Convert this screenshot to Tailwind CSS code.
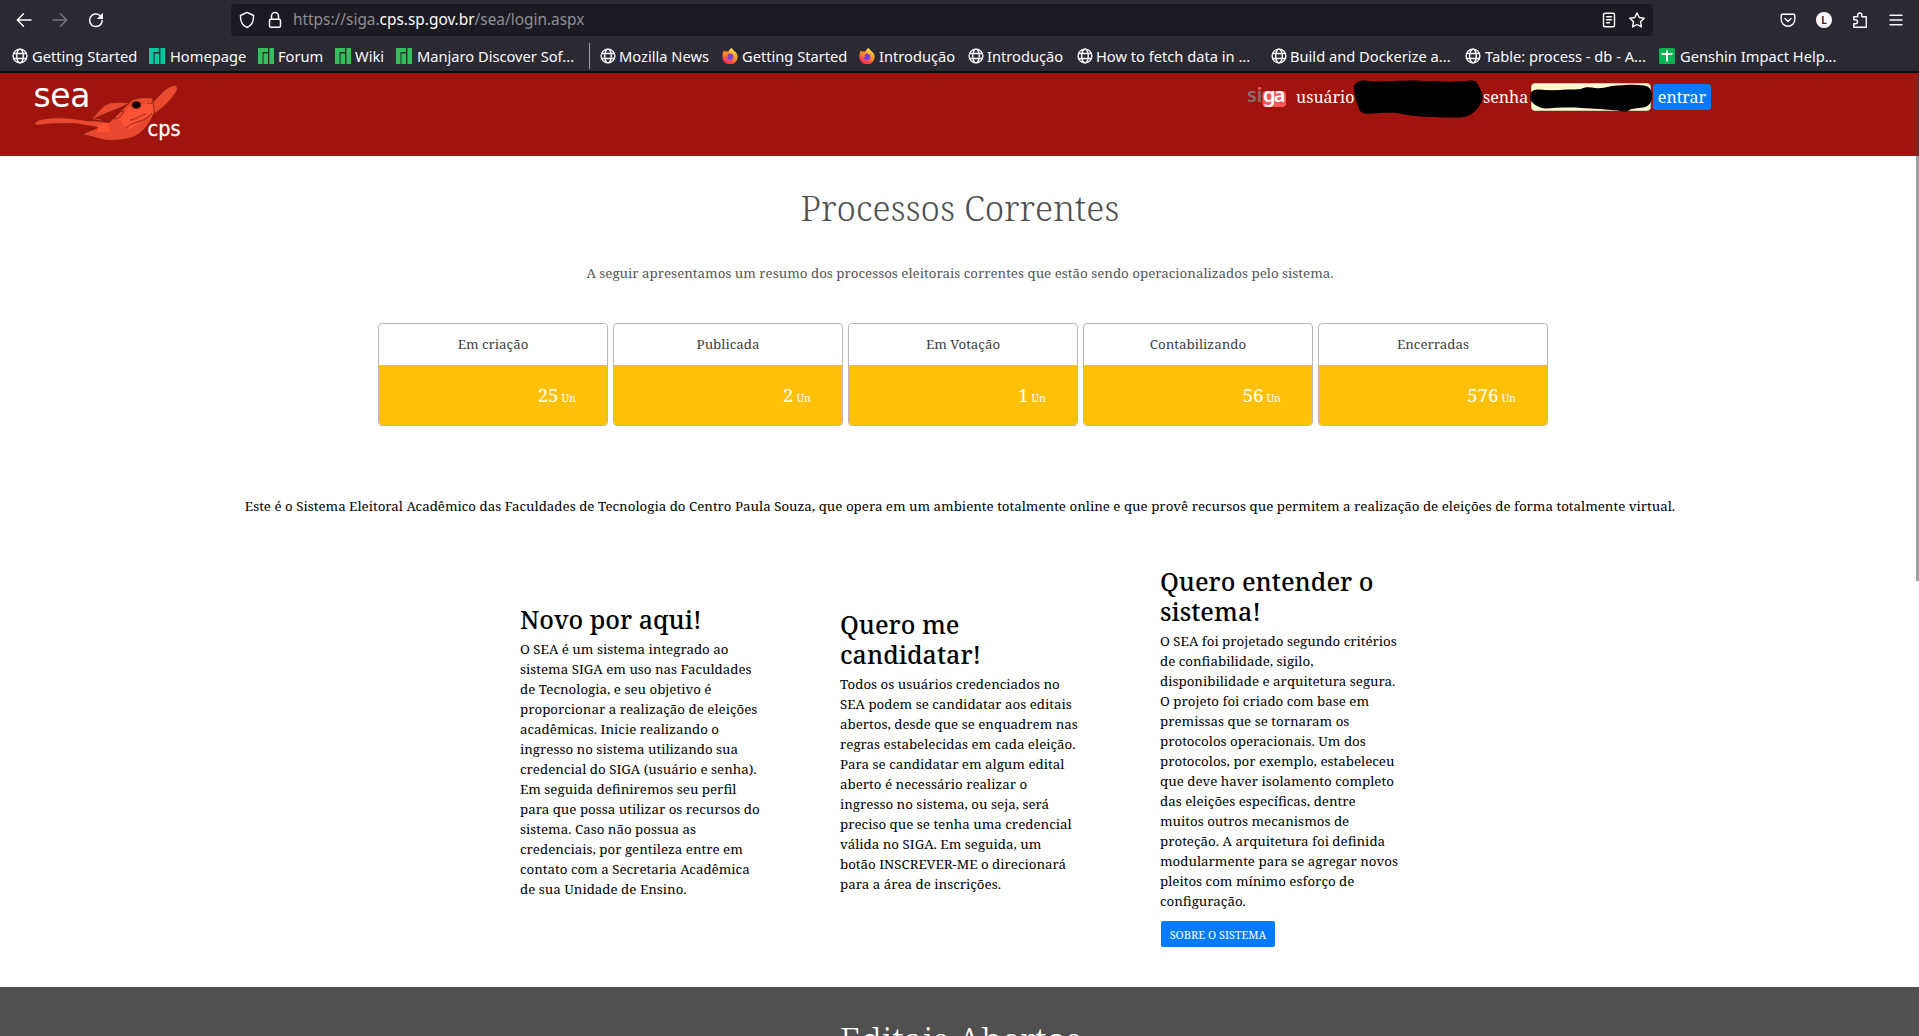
<!DOCTYPE html>
<html lang="pt-BR">
<head>
<meta charset="utf-8">
<title>SEA - Sistema Eleitoral Acadêmico</title>
<script src="https://cdn.jsdelivr.net/npm/@tailwindcss/browser@4"></script>
</head>
<body class="w-[1919px] h-[1036px] overflow-hidden bg-white text-black font-['Noto_Serif','DejaVu_Serif',serif]">
<svg class="absolute size-0">
  <defs><linearGradient id="flame" x1=".8" y1="0" x2=".3" y2="1"><stop offset="0" stop-color="#fff04f"/><stop offset=".45" stop-color="#ff9a24"/><stop offset="1" stop-color="#fb1763"/></linearGradient></defs>
  <symbol id="globe" viewBox="0 0 16 16"><g fill="none" stroke="#fbfbfe" stroke-width="1.4"><circle cx="8" cy="8" r="6.9"/><ellipse cx="8" cy="8" rx="3.3" ry="6.9"/><path d="M1.500 5.500h13M1.500 10.500h13"/></g></symbol>
  <symbol id="manjaro" viewBox="0 0 16 16"><path fill="currentColor" d="M0 0h10v4H4.500v12H0zM5.600 5.400H10V16H5.600zM11.400 0H16v16h-4.600z"/></symbol>
  <symbol id="firefox" viewBox="0 0 16 16">
    <path fill="url(#flame)" d="M9.500 0c1.200 1 1.500 2 2.800 3 2 1.600 3.400 3.400 3.300 6.200A7.600 7.600 0 0 1 .4 8.500C.3 6 1.200 3.600 2 2.300c.2.800.5 1.200 1 1.500 1-.5 2.300-.5 3.500-.2C7 2 8 .8 9.500 0z"/>
    <circle cx="8" cy="8.800" r="3.300" fill="#7a3fe0"/>
    <path fill="#ff8a1a" d="M2.300 4.300c2-.8 3.800-.4 5.200.6-.4 1.100-1.700 1-2 2-.2.900.8 1.300 1.500 1.700-1.500 1-2.800 0-3.300-1.300z"/>
  </symbol>
</svg>

<!-- Browser toolbar -->
<div class="h-[73px] bg-[#2b2a33] border-b-2 border-[#0e0d12] font-['Noto_Sans',sans-serif] text-[#fbfbfe] text-[14.67px]">
  <div class="h-10 flex items-center">
    <svg class="ml-4 size-4" viewBox="0 0 16 16" fill="none" stroke="#fbfbfe" stroke-width="1.500" stroke-linecap="round" stroke-linejoin="round"><path d="M15 8H1.500M7.500 1.800 1.300 8l6.200 6.200"/></svg>
    <svg class="ml-5 size-4" viewBox="0 0 16 16" fill="none" stroke="#77767d" stroke-width="1.500" stroke-linecap="round" stroke-linejoin="round"><path d="M1 8h13.500M8.500 1.800 14.700 8l-6.200 6.200"/></svg>
    <svg class="ml-5 size-4" viewBox="0 0 16 16"><path d="M14.200 8.500A6.300 6.300 0 1 1 12 3.500" fill="none" stroke="#fbfbfe" stroke-width="1.500" stroke-linecap="round"/><path fill="#fbfbfe" d="M15 .8V7H8.800z"/></svg>
    <div class="ml-[127px] w-[1422px] h-8 rounded bg-[#1c1b22] flex items-center">
      <svg class="ml-2 size-4 overflow-visible" viewBox="0 0 16 16" fill="none" stroke="#fbfbfe" stroke-width="1.400" stroke-linejoin="round"><path d="M8 .4 14.600 3.500C14.700 9.500 13 13.500 8 15.500 3 13.500 1.300 9.500 1.400 3.500z"/></svg>
      <svg class="ml-3 size-4 overflow-visible" viewBox="0 0 16 16" fill="none" stroke="#fbfbfe" stroke-width="1.500"><rect x="2.500" y="7.200" width="11" height="8" rx="1.500"/><path d="M4.500 7V4a3.500 3.500 0 0 1 7 0v3"/></svg>
      <span class="ml-[10px] text-[15.400px] text-[#8f8f97]">https://siga.<span class="text-[#fbfbfe]">cps.sp.gov.br</span>/sea/login.aspx</span>
      <svg class="ml-auto size-4" viewBox="0 0 16 16" fill="none" stroke="#fbfbfe" stroke-width="1.400" stroke-linecap="round"><rect x="2.500" y="1.200" width="11" height="13.600" rx="1.500"/><path d="M5.500 4.800h5M5.500 7.800h5M5.500 10.800h3"/></svg>
      <svg class="ml-3 mr-2 size-4" viewBox="0 0 16 16" fill="none" stroke="#fbfbfe" stroke-width="1.400" stroke-linejoin="round"><path d="m8 .9 2.200 4.600 5 .7-3.700 3.500.9 5.200L8 12.500l-4.400 2.400.9-5.200L.8 6.200l5-.7z"/></svg>
    </div>
    <svg class="ml-[127px] size-4" viewBox="0 0 16 16" fill="none" stroke="#fbfbfe" stroke-width="1.400" stroke-linecap="round" stroke-linejoin="round"><path d="M2.500 2.200h11a1.300 1.300 0 0 1 1.300 1.300v4a6.800 6.800 0 0 1-13.600 0v-4a1.300 1.300 0 0 1 1.300-1.300zM5 6.500l3 3 3-3"/></svg>
    <div class="ml-5 size-4 rounded-full bg-[#fbfbfe] text-[#2b2a33] text-[10px] font-bold flex items-center justify-center">L</div>
    <svg class="ml-5 size-4" viewBox="0 0 16 16" fill="none" stroke="#fbfbfe" stroke-width="1.400" stroke-linejoin="round"><path d="M1.800 4.700h4V3a2 2 0 0 1 4 0v1.700h4.500v10.500H1.800v-3.500h1.700a2 2 0 0 0 0-4H1.800z"/></svg>
    <svg class="ml-5 size-4" viewBox="0 0 16 16" stroke="#fbfbfe" stroke-width="1.500" stroke-linecap="round"><path d="M2 3.200h12M2 8h12M2 12.800h12"/></svg>
  </div>
  <div class="h-8 pl-[12px] flex items-center whitespace-nowrap">
    <div class="w-[137px] flex items-center gap-1"><svg class="size-4"><use href="#globe"/></svg><span>Getting Started</span></div>
    <div class="w-[109px] flex items-center gap-[5px]"><svg class="size-4 text-[#00c8a0]"><use href="#manjaro"/></svg><span>Homepage</span></div>
    <div class="w-[77px] flex items-center gap-1"><svg class="size-4 text-[#35bf5c]"><use href="#manjaro"/></svg><span>Forum</span></div>
    <div class="w-[61px] flex items-center gap-1"><svg class="size-4 text-[#35bf5c]"><use href="#manjaro"/></svg><span>Wiki</span></div>
    <div class="w-[193px] flex items-center gap-[5px]"><svg class="size-4 text-[#35bf5c]"><use href="#manjaro"/></svg><span>Manjaro Discover Sof...</span></div>
    <div class="w-px h-[26px] mr-[10px] bg-[#a0a0a6]"></div>
    <div class="w-[122px] flex items-center gap-[3px]"><svg class="size-4"><use href="#globe"/></svg><span>Mozilla News</span></div>
    <div class="w-[137px] flex items-center gap-1"><svg class="size-4"><use href="#firefox"/></svg><span>Getting Started</span></div>
    <div class="w-[109px] flex items-center gap-1"><svg class="size-4"><use href="#firefox"/></svg><span>Introdução</span></div>
    <div class="w-[109px] flex items-center gap-[3px]"><svg class="size-4"><use href="#globe"/></svg><span>Introdução</span></div>
    <div class="w-[194px] flex items-center gap-[3px]"><svg class="size-4"><use href="#globe"/></svg><span>How to fetch data in ...</span></div>
    <div class="w-[194px] flex items-center gap-[3px]"><svg class="size-4"><use href="#globe"/></svg><span>Build and Dockerize a...</span></div>
    <div class="w-[194px] flex items-center gap-1"><svg class="size-4"><use href="#globe"/></svg><span>Table: process - db - A...</span></div>
    <div class="flex items-center gap-[5px]"><svg class="size-4" viewBox="0 0 16 16"><rect width="16" height="16" rx="1.500" fill="#00b451"/><path d="M2.500 6h11M8 2.500v11" stroke="#fff" stroke-width="2"/></svg><span>Genshin Impact Help...</span></div>
  </div>
</div>

<!-- Site header -->
<header class="h-[83px] bg-[#a1130d] flex items-start">
  <svg class="ml-8 mt-2 w-[152px] h-[66px] shrink-0" viewBox="32 81 152 66">
    <g stroke="#7d1b10" stroke-width=".7" stroke-linejoin="round">
      <path fill="#e8482e" d="M92 119c6-7 11-14 18-16 7-1 14-1 20 0l-21 11-8 7z"/>
      <path fill="#a1130d" d="M95 118l32-13-18 16z"/>
      <path fill="#ea4a2e" d="M152 103C160 95 165 88 172 86C176 84.500 178 87 177 90C173 99 163 108 154 114z"/>
      <path fill="#e8482e" d="M34.700 123.500C36 120 46 117.800 57 117.800C70 118 78 119 88 121C96 120 102 122 109 122.500C118 114 125 107 131 101C136 97 145 97.500 152.500 98L154.500 112C151 122 143 133 133.500 137C125 140 114 141 104 140C95 138 89 135 80.500 134.500L98 127.500C92 126 84 125.500 78 124C68 123 52 123.500 44 124.500C40 125 35 126 34.700 123.500z"/>
    </g>
    <path fill="#fb5333" d="M118 118l14-13c7-2 14-1 21 0v8c-10 7-16 13-25 17zM97 124l12-1 1 9H97z"/>
    <path d="M114 119c2-5 6-8 10-8-1 4-5 8-10 8M126 128c8-8 19-5 26-15M130 120c5 0 10-5 16-6M82 134l16-6.500" fill="none" stroke="#7d1b10" stroke-width=".8"/>
    <ellipse cx="136.300" cy="105" rx="5" ry="4" fill="#7d1b10"/><ellipse cx="136.300" cy="104.800" rx="3.700" ry="3.100" fill="#000"/>
    <path d="M148.500 103v1M151.500 103v1" stroke="#7d1b10"/>
    <text x="33.500" y="107" font-size="33" textLength="57" class="fill-white font-['DejaVu_Sans',sans-serif]">sea</text>
    <text x="147.500" y="136" font-size="22" textLength="33" lengthAdjust="spacingAndGlyphs" class="fill-white stroke-white [stroke-width:.3] font-['DejaVu_Sans',sans-serif]">cps</text>
  </svg>
  <div class="ml-[1063px] mt-[7px] flex items-start">
    <svg class="w-[42px] h-8" viewBox="1247 80 42 32" font-size="20">
      <rect x="1262.500" y="91" width="23.500" height="16" rx="3.500" fill="#ff5555"/>
      <text x="1247" y="102" textLength="15.500" lengthAdjust="spacingAndGlyphs" class="fill-[#7c7472] font-['Noto_Sans',sans-serif] font-semibold">si</text>
      <text x="1263" y="102" textLength="22.500" class="fill-white font-['Noto_Sans',sans-serif] font-semibold">ga</text>
      <circle cx="1259.700" cy="88.500" r="1.700" fill="#f0504d"/>
    </svg>
    <div class="relative ml-[7px] h-[38px] w-[416px] flex items-start text-white text-[16px] leading-[22px]">
      <span class="w-[187px] shrink-0 mt-[6px]">usuário</span>
      <span class="w-[48px] shrink-0 mt-[6px]">senha</span>
      <span class="mt-[3px] w-[120px] h-7 rounded-sm border border-[#c9c9b8] bg-[#fffbcd]"></span>
      <span class="ml-[2px] mt-1 w-[58px] h-[26px] rounded-[3px] bg-[#007bff] flex justify-center leading-[26px]">entrar</span>
      <svg class="absolute left-0 top-0 w-[416px] h-[38px] overflow-visible" viewBox="1296 80 416 38">
        <path d="M1354 86c3-6 9-6 16-5 12 1 28-1 46-.5 20 1 40 2 54 0 6-.5 8 3 10 8 4 7 3 13-1 18-5 7-11 11-20 11-18 0-36 0-55-3-12-3-22-1-33-1-9 1-12-2-13-8-3-6-4-14-4-19.500z"/>
        <path d="M1530 97c0-5 3-8 9-7.500 9 1 18 1 27 0 6 0 10 0 15-.5 3-2 9-2 14-1 6 1 11-1 17-2 11-1 22-2 32-.5 6 1 8 5 8 10 0 7-3 11-9 12-6 1-10 1-13 2-3 3-8 2-12 1-13-1-24-2-37-2.500-13-1-26 0-36 .5-7-1-15-5-15-12z"/>
      </svg>
    </div>
  </div>
</header>

<main class="h-[831px] flex flex-col items-center">
  <h1 class="mt-[28px] ml-px h-12 leading-[48px] text-[35px] font-light text-[#505050] whitespace-nowrap">Processos Correntes</h1>
  <p class="mt-[31px] ml-px leading-5 text-[13.333px] text-[#555] whitespace-nowrap">A seguir apresentamos um resumo dos processos eleitorais correntes que estão sendo operacionalizados pelo sistema.</p>
  <div class="mt-10 ml-[7px] flex gap-[5px] text-[13.333px] text-[#404040]">
    <div class="w-[230px] h-[103px] rounded border border-[#b8b8b8] overflow-hidden"><div class="h-[41px] leading-[41px] text-center">Em criação</div><div class="h-[60px] bg-[#ffc107] text-white text-right pr-[31px] leading-[60px]"><span class="text-[18.667px]">25</span><span class="ml-[3px] text-[10.667px]">Un</span></div></div>
    <div class="w-[230px] h-[103px] rounded border border-[#b8b8b8] overflow-hidden"><div class="h-[41px] leading-[41px] text-center">Publicada</div><div class="h-[60px] bg-[#ffc107] text-white text-right pr-[31px] leading-[60px]"><span class="text-[18.667px]">2</span><span class="ml-[3px] text-[10.667px]">Un</span></div></div>
    <div class="w-[230px] h-[103px] rounded border border-[#b8b8b8] overflow-hidden"><div class="h-[41px] leading-[41px] text-center">Em Votação</div><div class="h-[60px] bg-[#ffc107] text-white text-right pr-[31px] leading-[60px]"><span class="text-[18.667px]">1</span><span class="ml-[3px] text-[10.667px]">Un</span></div></div>
    <div class="w-[230px] h-[103px] rounded border border-[#b8b8b8] overflow-hidden"><div class="h-[41px] leading-[41px] text-center">Contabilizando</div><div class="h-[60px] bg-[#ffc107] text-white text-right pr-[31px] leading-[60px]"><span class="text-[18.667px]">56</span><span class="ml-[3px] text-[10.667px]">Un</span></div></div>
    <div class="w-[230px] h-[103px] rounded border border-[#b8b8b8] overflow-hidden"><div class="h-[41px] leading-[41px] text-center">Encerradas</div><div class="h-[60px] bg-[#ffc107] text-white text-right pr-[31px] leading-[60px]"><span class="text-[18.667px]">576</span><span class="ml-[3px] text-[10.667px]">Un</span></div></div>
  </div>
  <p class="mt-[70px] ml-px leading-5 text-[13.333px] whitespace-nowrap">Este é o Sistema Eleitoral Acadêmico das Faculdades de Tecnologia do Centro Paula Souza, que opera em um ambiente totalmente online e que provê recursos que permitem a realização de eleições de forma totalmente virtual.</p>
  <div class="w-full mt-[52px] pl-[520px] flex items-start gap-20 whitespace-nowrap text-[13.333px] leading-5">
    <section class="w-60 mt-[36px]">
      <h2 class="text-[25px] font-medium leading-[30px] mb-[5px]">Novo por aqui!</h2>
      <p>O SEA é um sistema integrado ao<br>sistema SIGA em uso nas Faculdades<br>de Tecnologia, e seu objetivo é<br>proporcionar a realização de eleições<br>acadêmicas. Inicie realizando o<br>ingresso no sistema utilizando sua<br>credencial do SIGA (usuário e senha).<br>Em seguida definiremos seu perfil<br>para que possa utilizar os recursos do<br>sistema. Caso não possua as<br>credenciais, por gentileza entre em<br>contato com a Secretaria Acadêmica<br>de sua Unidade de Ensino.</p>
    </section>
    <section class="w-60 mt-[41px]">
      <h2 class="text-[25px] font-medium leading-[30px] mb-[5px]">Quero me<br>candidatar!</h2>
      <p>Todos os usuários credenciados no<br>SEA podem se candidatar aos editais<br>abertos, desde que se enquadrem nas<br>regras estabelecidas em cada eleição.<br>Para se candidatar em algum edital<br>aberto é necessário realizar o<br>ingresso no sistema, ou seja, será<br>preciso que se tenha uma credencial<br>válida no SIGA. Em seguida, um<br>botão INSCREVER-ME o direcionará<br>para a área de inscrições.</p>
    </section>
    <section class="w-60 -mt-[2px]">
      <h2 class="text-[25px] font-medium leading-[30px] mb-[5px]">Quero entender o<br>sistema!</h2>
      <p>O SEA foi projetado segundo critérios<br>de confiabilidade, sigilo,<br>disponibilidade e arquitetura segura.<br>O projeto foi criado com base em<br>premissas que se tornaram os<br>protocolos operacionais. Um dos<br>protocolos, por exemplo, estabeleceu<br>que deve haver isolamento completo<br>das eleições específicas, dentre<br>muitos outros mecanismos de<br>proteção. A arquitetura foi definida<br>modularmente para se agregar novos<br>pleitos com mínimo esforço de<br>configuração.</p>
      <div class="ml-px mt-[10px] w-[114px] h-[26px] rounded-[2px] bg-[#007bff] text-white text-[11px] leading-[28px] text-center">SOBRE O SISTEMA</div>
    </section>
  </div>
</main>

<section class="h-[49px] bg-[#505050] text-white overflow-hidden flex justify-center">
  <h1 class="mt-[29px] ml-[2px] leading-[48px] text-[35px] font-light whitespace-nowrap">Editais Abertos</h1>
</section>

<!-- Page scrollbar -->
<div class="absolute left-[1916px] top-[75px] w-[3px] h-[506px] bg-[#404040]/50"></div>
</body>
</html>
